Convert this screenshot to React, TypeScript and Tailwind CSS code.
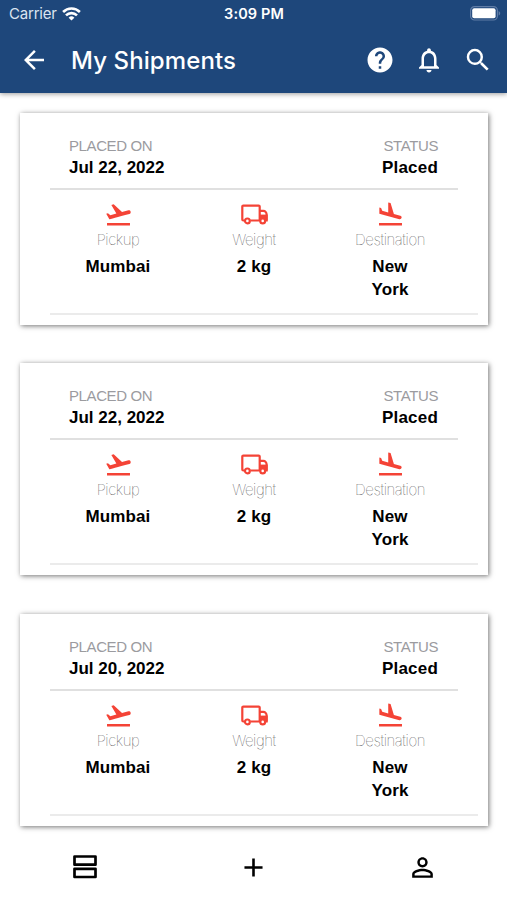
import React from 'react';
import {
  MdAdd,
  MdArrowBack,
  MdFlightLand,
  MdFlightTakeoff,
  MdHelp,
  MdNotificationsNone,
  MdPersonOutline,
  MdSearch,
} from 'react-icons/md';

interface Shipment {
  placedOn: string;
  status: string;
  pickup: string;
  weight: string;
  destination: string;
}

const shipments: Shipment[] = [
  { placedOn: 'Jul 22, 2022', status: 'Placed', pickup: 'Mumbai', weight: '2 kg', destination: 'New York' },
  { placedOn: 'Jul 22, 2022', status: 'Placed', pickup: 'Mumbai', weight: '2 kg', destination: 'New York' },
  { placedOn: 'Jul 20, 2022', status: 'Placed', pickup: 'Mumbai', weight: '2 kg', destination: 'New York' },
];

function WifiIcon() {
  return (
    <svg width="19" height="14" viewBox="0 0 19 14" fill="none" stroke="#fff" strokeWidth="2.6">
      <path d="M1.1 5a12 12 0 0 1 16.8 0" />
      <path d="M4 8.4a7.8 7.8 0 0 1 11 0" />
      <path d="M9.5 13.6 6.6 10.7a4.2 4.2 0 0 1 5.8 0z" fill="#fff" stroke="none" />
    </svg>
  );
}

function BatteryIcon() {
  return (
    <svg width="31" height="15" viewBox="0 0 31 15">
      <rect x="0.6" y="0.6" width="26.8" height="13.4" rx="4" fill="none" stroke="#5f7ca6" strokeWidth="1.2" />
      <rect x="2.2" y="2.3" width="23.4" height="10" rx="2" fill="#fff" />
      <path d="M28.6 5v4.6c1-.4 1.6-1.3 1.6-2.3s-.6-1.9-1.6-2.3z" fill="#5f7ca6" />
    </svg>
  );
}

function TruckIcon() {
  return (
    <svg width="29" height="29" viewBox="0 0 29 29" fill="none" stroke="currentColor" strokeWidth="2.2">
      <path d="M4.4 20.5H3.3a1 1 0 0 1-1-1V6.600a1 1 0 0 1 1-1h15.400a1 1 0 0 1 1 1v13.900H10.400" />
      <path d="M19.7 10.800h3.600c1.800 0 3.300 1.600 3.300 3.800v5.900" />
      <path d="M19.7 14.600h8v6.900h-8z" fill="currentColor" stroke="none" />
      <circle cx="7.400" cy="20.900" r="2.400" fill="#fff" />
      <circle cx="22.700" cy="20.900" r="2.400" fill="#fff" />
    </svg>
  );
}

function AgendaIcon() {
  return (
    <svg width="24" height="24" viewBox="0 0 24 24" fill="none" stroke="currentColor" strokeWidth="2.7" strokeLinejoin="round">
      <rect x="1.5" y="1.5" width="21" height="8.2" />
      <rect x="1.5" y="13.8" width="21" height="8.2" />
    </svg>
  );
}

function StatusBar() {
  return (
    <div className="grid h-[27px] grid-cols-3 items-center pl-[9px] pr-[6px] text-[15px] text-white">
      <div className="flex items-center gap-[5px]">
        <span className="mt-px tracking-[-0.2px] text-[#dbe4f0]">Carrier</span>
        <WifiIcon />
      </div>
      <span className="mr-[2px] mt-px text-center text-[14.5px] font-semibold tracking-[0.1px]">3:09 PM</span>
      <div className="flex justify-end">
        <BatteryIcon />
      </div>
    </div>
  );
}

function Header() {
  return (
    <header className="relative z-10 h-[93px] bg-[#1e477b] font-['Inter',sans-serif] shadow-[0_1px_5px_rgba(0,0,0,0.4)]">
      <StatusBar />
      <div className="flex h-[66px] items-center pl-[19px] pr-[14px] text-white">
        <MdArrowBack size={30} />
        <h1 className="ml-[22px] mt-px flex-1 text-[24px] font-medium tracking-[0.1px]">My Shipments</h1>
        <div className="flex items-center gap-[19px]">
          <MdHelp size={30} />
          <MdNotificationsNone size={30} />
          <MdSearch size={30} />
        </div>
      </div>
    </header>
  );
}

interface DetailProps {
  icon: React.ReactNode;
  label: string;
  value: string;
}

function Detail({ icon, label, value }: DetailProps) {
  return (
    <div className="flex w-[136px] flex-col items-center">
      <div className="text-[#f44336]">{icon}</div>
      <span className="mt-px font-['Inter',sans-serif] text-[15px] font-thin leading-[20px] tracking-[-0.4px] text-[#333]">
        {label}
      </span>
      <span className="mt-[5px] w-[70px] text-center text-[17px] font-bold leading-[23px] tracking-[0.1px] text-black">
        {value}
      </span>
    </div>
  );
}

function ShipmentCard({ shipment }: { shipment: Shipment }) {
  return (
    <div className="h-[212px] bg-white pl-[30px] pr-[10px] pt-[22px] shadow-[1px_1px_5px_rgba(0,0,0,0.55)]">
      <div className="mr-[20px] flex h-[55px] justify-between border-b-2 border-[#e0e0e0] pl-[19px] pr-[20px]">
        <div>
          <p className="text-[15px] leading-[22px] tracking-[-0.4px] text-[#9b9b9f]">PLACED ON</p>
          <p className="text-[17px] font-bold leading-[21px] text-black">{shipment.placedOn}</p>
        </div>
        <div className="text-right">
          <p className="text-[15px] leading-[22px] tracking-[-0.4px] text-[#9b9b9f]">STATUS</p>
          <p className="text-[17px] font-bold leading-[21px] tracking-[0.2px] text-black">{shipment.status}</p>
        </div>
      </div>
      <div className="mr-[20px] flex h-[123px] justify-center pt-[10px]">
        <Detail icon={<MdFlightTakeoff size={29} />} label="Pickup" value={shipment.pickup} />
        <Detail icon={<TruckIcon />} label="Weight" value={shipment.weight} />
        <Detail icon={<MdFlightLand size={29} />} label="Destination" value={shipment.destination} />
      </div>
      <div className="h-[2px] bg-[#ebebeb]" />
    </div>
  );
}

function BottomNav() {
  return (
    <nav className="grid h-[66px] grid-cols-3 items-center justify-items-center text-black">
      <AgendaIcon />
      <MdAdd size={31} />
      <MdPersonOutline size={31} />
    </nav>
  );
}

export default function App() {
  return (
    <div className="flex h-[900px] w-[507px] flex-col overflow-hidden bg-white font-['Liberation_Sans',Arial,sans-serif]">
      <Header />
      <main className="flex flex-1 flex-col gap-[38.4px] pl-[20px] pr-[19px] pt-[20px]">
        {shipments.map((shipment, i) => (
          <ShipmentCard key={i} shipment={shipment} />
        ))}
      </main>
      <BottomNav />
    </div>
  );
}
